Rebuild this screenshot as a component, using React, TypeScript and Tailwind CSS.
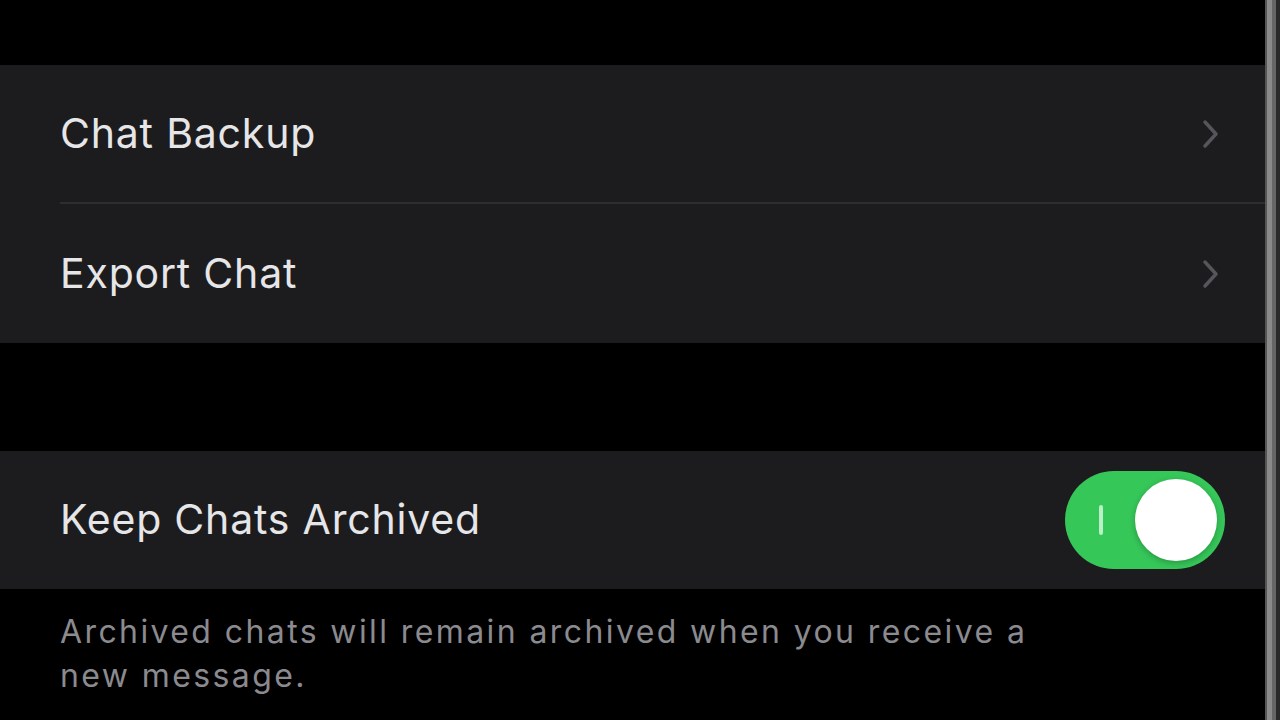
import React from "react";

function Chevron() {
  return (
    <svg width="18" height="30" viewBox="0 0 18 30" fill="none">
      <path d="M3 3 L14 15 L3 27" stroke="#55555a" strokeWidth="3.5" strokeLinecap="round" strokeLinejoin="round" />
    </svg>
  );
}

function Row({ label, last }: { label: string; last?: boolean }) {
  return (
    <div className="flex h-[139px] items-stretch pl-[60px]">
      <div className={"flex flex-1 items-center justify-between pr-[45px] " + (last ? "" : "border-b-2 border-[#2e2e31]")}>
        <span className="text-[41px] tracking-[0.8px] text-[#e6e6e8]">{label}</span>
        <Chevron />
      </div>
    </div>
  );
}

export default function App() {
  return (
    <div
      className="flex h-[720px] w-[1280px] overflow-hidden bg-black"
      style={{ fontFamily: "Inter, 'Noto Sans', sans-serif" }}
    >
      <div className="flex flex-1 flex-col">
        <div className="h-[65px]" />
        <div className="bg-[#1c1c1e]">
          <Row label="Chat Backup" />
          <Row label="Export Chat" last />
        </div>
        <div className="h-[108px]" />
        <div className="flex h-[138px] items-center justify-between bg-[#1c1c1e] pl-[60px] pr-[40px]">
          <span className="text-[41px] tracking-[0.8px] text-[#e6e6e8]">Keep Chats Archived</span>
          <div className="flex h-[98px] w-[160px] items-center justify-end rounded-full bg-[#36c759] pr-[8px]">
            <div className="mr-auto ml-[34px] h-[30px] w-[4px] rounded-full bg-[#b9f0c6]" />
            <div className="h-[82px] w-[82px] rounded-full bg-white shadow-[0_2px_6px_rgba(0,0,0,0.25)]" />
          </div>
        </div>
        <div className="pl-[60px] pt-[21px] text-[32px] leading-[44px] tracking-[2.4px] text-[#8a8a8f] whitespace-nowrap">
          Archived chats will remain archived when you receive a
          <br />
          new message.
        </div>
      </div>
      <div className="flex w-[15px]">
        <div className="w-[2px] bg-[#555]" />
        <div className="w-[5px] bg-[#8a8a8a]" />
        <div className="w-[4px] bg-[#666]" />
        <div className="w-[4px] bg-[#2a2a2a]" />
      </div>
    </div>
  );
}
